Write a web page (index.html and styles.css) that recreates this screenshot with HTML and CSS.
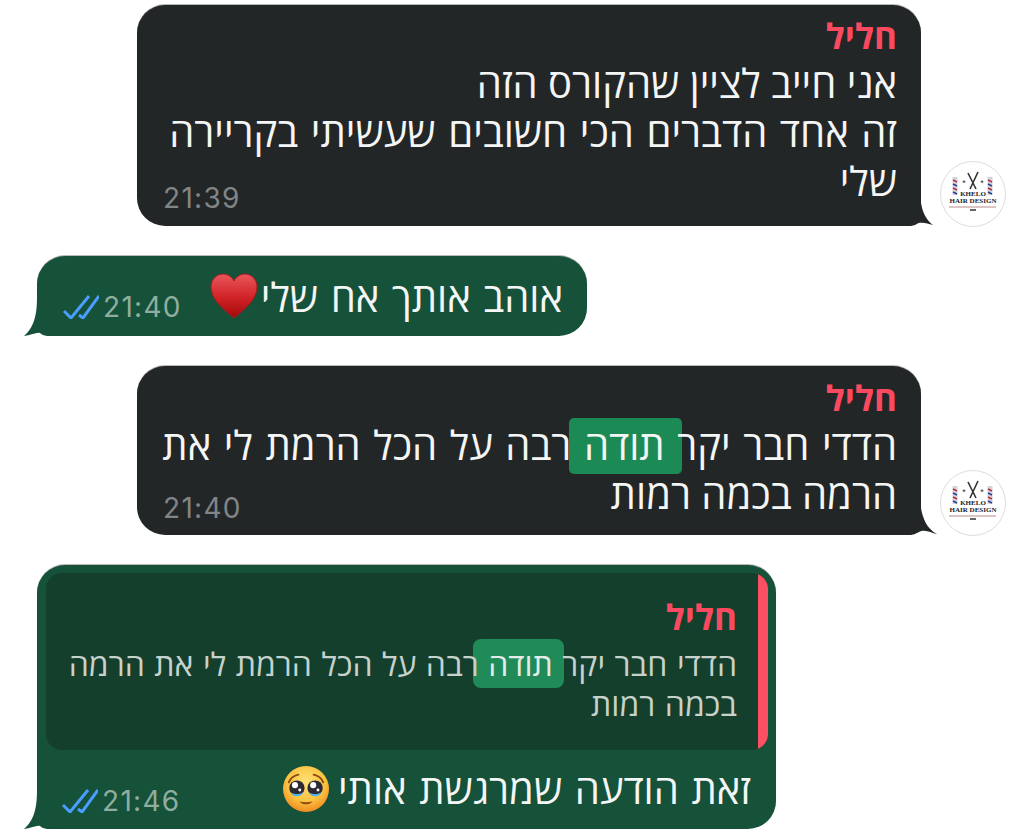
FILE: index.html
```html
<!DOCTYPE html>
<html lang="he">
  <head>
    <meta charset="utf-8" />
    <title>Chat</title>
    <link rel="stylesheet" href="styles.css">
  </head>
  <body>
    <svg class="defs" width="0" height="0">
      <defs>
        <linearGradient id="heart-fill" x1="0" y1="0" x2="0" y2="1">
          <stop offset="0" stop-color="#e9565a" />
          <stop offset="0.55" stop-color="#d02226" />
          <stop offset="1" stop-color="#a30808" />
        </linearGradient>
        <radialGradient id="face-fill" cx="0.5" cy="0.35" r="0.7">
          <stop offset="0" stop-color="#ffe277" />
          <stop offset="0.6" stop-color="#fbc13f" />
          <stop offset="1" stop-color="#ee7f1c" />
        </radialGradient>
        <symbol id="ticks" viewBox="0 0 36 24">
          <path d="M1 16l7 7L26 1" fill="none" stroke="#4a9eff" stroke-width="3" />
          <path d="M16 20l4 3L36 1" fill="none" stroke="#4a9eff" stroke-width="3" />
        </symbol>
        <symbol id="avatar" viewBox="0 0 66 66">
          <circle cx="33" cy="33" r="32.5" fill="#fff" stroke="#ddd" />
          <path d="M15 16v18M50 16v18" fill="none" stroke="#d3d3de" stroke-width="5" />
          <path d="M13 19l4 2M13 27l4 2M48 19l4 2M48 27l4 2" fill="none" stroke="#b3303c" stroke-width="1.500" />
          <path d="M13 23l4 2M13 31l4 2M48 23l4 2M48 31l4 2" fill="none" stroke="#2c3f8f" stroke-width="1.500" />
          <path d="M28 12l8 16M38 11l-8 17" fill="none" stroke="#333" stroke-width="1.600" />
          <text x="24" y="25" class="avatar-star">*</text>
          <text x="42" y="25" class="avatar-star">*</text>
          <text x="33" y="35" class="avatar-name">KHELO</text>
          <text x="33" y="42" class="avatar-name">HAIR DESIGN</text>
          <path d="M9 46h47" fill="none" stroke="#b98a8a" />
          <path d="M30 49h6" fill="none" stroke="#333" stroke-width="1.500" />
        </symbol>
      </defs>
    </svg>

    <div class="chat">
      <div class="row row-in">
        <div class="bubble bubble-in first-in">
          <div class="name">חליל</div>
          <div class="line">אני חייב לציין שהקורס הזה</div>
          <div class="line spaced">זה אחד הדברים הכי חשובים שעשיתי בקריירה</div>
          <div class="foot">
            <div class="line">שלי</div>
            <div class="meta">21:39</div>
          </div>
          <svg class="tail tail-right" viewBox="0 0 40 40" fill="#232627">
            <path d="M0 0H27C27 14 28 30 40 39C33 37 28 35 20 39L0 40Z" />
          </svg>
        </div>
        <svg class="avatar"><use href="#avatar" /></svg>
      </div>

      <div class="row">
        <div class="bubble bubble-out short-out">
          <div class="foot">
            <div class="line spaced">
              אוהב אותך אח שלי<svg class="emoji heart" viewBox="0 0 48 46">
                <path d="M24 45C12 35 1 26 1 14C1 6 7 1 13 1C18 1 22 4 24 8C26 4 30 1 35 1C41 1 47 6 47 14C47 26 36 35 24 45Z" fill="url(#heart-fill)" stroke="#a81a1c" />
              </svg>
            </div>
            <div class="meta"><svg class="ticks"><use href="#ticks" /></svg>21:40</div>
          </div>
          <svg class="tail tail-left" viewBox="0 0 40 40" fill="#16513a">
            <path d="M40 0H13C13 14 12 30 0 40C8 39 16 34 24 38L40 40Z" />
          </svg>
        </div>
      </div>

      <div class="row row-in">
        <div class="bubble bubble-in second-in">
          <div class="name">חליל</div>
          <div class="line spaced">הדדי חבר יקר <span class="mark">תודה</span> רבה על הכל הרמת לי את</div>
          <div class="foot">
            <div class="line">הרמה בכמה רמות</div>
            <div class="meta">21:40</div>
          </div>
          <svg class="tail tail-right wide" viewBox="0 0 40 40" fill="#232627">
            <path d="M0 0H23C23 14 26 32 40 39C33 38 28 33 20 38L0 40Z" />
          </svg>
        </div>
        <svg class="avatar"><use href="#avatar" /></svg>
      </div>

      <div class="row">
        <div class="bubble bubble-out long-out">
          <div class="quote">
            <div class="quote-bar"></div>
            <div class="quote-body">
              <div class="name quote-name">חליל</div>
              <div class="quote-line">הדדי חבר יקר <span class="mark">תודה</span> רבה על הכל הרמת לי את הרמה</div>
              <div class="quote-line">בכמה רמות</div>
            </div>
          </div>
          <div class="foot">
            <div class="line spaced">
              זאת הודעה שמרגשת אותי<svg class="emoji" viewBox="0 0 48 48">
                <circle cx="24" cy="24" r="24" fill="url(#face-fill)" />
                <path d="M6 17C8 12 12 10 16 9M42 17C40 12 36 10 32 9" fill="none" stroke="#8a4a12" stroke-width="2" stroke-linecap="round" />
                <circle cx="14.500" cy="23" r="8" fill="#2d2a33" />
                <circle cx="33.500" cy="23" r="8" fill="#2d2a33" />
                <circle cx="12.500" cy="20" r="3.200" fill="#fff" />
                <circle cx="31.500" cy="20" r="3.200" fill="#fff" />
                <circle cx="17.500" cy="25" r="1.500" fill="#fff" />
                <circle cx="36.500" cy="25" r="1.500" fill="#fff" />
                <path d="M8 27C10 33 19 33 21 27C18 30 11 30 8 27ZM27 27C29 33 38 33 40 27C37 30 30 30 27 27Z" fill="#4fb3f0" />
                <path d="M17 37C21 41 27 41 31 37C27 38 21 38 17 37Z" fill="#8a4a12" />
              </svg>
            </div>
            <div class="meta"><svg class="ticks"><use href="#ticks" /></svg>21:46</div>
          </div>
          <svg class="tail tail-left" viewBox="0 0 40 40" fill="#16513a">
            <path d="M40 0H13C13 14 12 30 0 40C8 39 16 34 24 38L40 40Z" />
          </svg>
        </div>
      </div>
    </div>
  </body>
</html>
```
FILE: styles.css
```css
body {
  margin: 0;
  padding: 0;
  background-color: #fff;
  font-family: "Open Sans", "Liberation Sans", sans-serif;
}

.defs {
  display: block;
  height: 0;
}

.chat {
  display: flex;
  flex-direction: column;
  gap: 30px;
  padding: 5px 0 0 37px;
}

.row {
  display: flex;
  align-items: flex-end;
}

.row-in {
  padding-left: 100px;
  gap: 19px;
}

.bubble {
  position: relative;
  isolation: isolate;
  box-sizing: border-box;
  direction: rtl;
  border-radius: 28px;
  padding: 0 24px 0 26px;
  color: #f4f5f5;
  box-shadow: 0 -1px 0 #b9b9b9;
}

.bubble-in {
  width: 784px;
  background-color: #232627;
  border-bottom-right-radius: 10px;
}

.bubble-out {
  background-color: #16513a;
  border-bottom-left-radius: 10px;
}

.first-in {
  height: 221px;
  padding-top: 9px;
}

.second-in {
  height: 169px;
  padding-top: 10px;
}

.short-out {
  width: 550px;
  height: 80px;
  padding-top: 16px;
}

.long-out {
  width: 739px;
  height: 264px;
  padding: 8px 25px 0 25px;
}

.name {
  font-size: 35px;
  font-weight: 700;
  line-height: 44px;
  color: #fb4a5f;
}

.line {
  font-size: 40px;
  line-height: 49px;
  white-space: nowrap;
}

.spaced {
  word-spacing: 2.200px;
}

.foot {
  display: flex;
  justify-content: space-between;
}

.meta {
  display: flex;
  align-items: center;
  gap: 4px;
  direction: ltr;
  margin-top: 18px;
  height: 48px;
  font-family: Inter, "Liberation Sans", sans-serif;
  font-size: 28px;
  letter-spacing: 1.300px;
  color: #818587;
}

.second-in .meta {
  margin-top: 15px;
}

.bubble-out .meta {
  color: #8fae9f;
}

.short-out .meta {
  margin-top: 11px;
}

.long-out .meta {
  margin-top: 13px;
}

.ticks {
  width: 36px;
  height: 24px;
}

.emoji {
  width: 48px;
  height: 46px;
  margin-right: 8px;
  vertical-align: -8px;
}

.heart {
  margin-right: 3px;
  vertical-align: -7px;
}

.mark {
  position: relative;
}

.mark::before {
  content: "";
  position: absolute;
  z-index: -1;
  top: 1px;
  bottom: -2px;
  left: -15px;
  right: -17px;
  border-radius: 5px;
  background-color: #1c8a55;
}

.quote {
  display: flex;
  isolation: isolate;
  height: 177px;
  margin: 0 -17px 0 -16px;
  border-radius: 16px;
  overflow: hidden;
  background-color: #143f2d;
}

.quote-bar {
  width: 10px;
  background-color: #fb4f63;
}

.quote-body {
  padding: 21px 21px 0 0;
}

.quote-name {
  line-height: 46px;
  margin-bottom: 4px;
}

.quote-line {
  font-size: 32px;
  line-height: 40px;
  word-spacing: 1.200px;
  white-space: nowrap;
  color: #c6d2cc;
}

.quote-line .mark {
  color: #e3ece7;
}

.quote-line .mark::before {
  top: -3px;
  bottom: -3px;
  left: -15px;
  right: -11px;
  background-color: #208a58;
  border-radius: 8px;
}

.long-out .foot {
  margin-top: 14px;
}

.tail {
  position: absolute;
  bottom: 0;
  width: 40px;
  height: 40px;
}

.tail-left {
  left: -13px;
  z-index: -1;
}

.tail-right {
  right: -12px;
  z-index: -1;
}

.tail-right.wide {
  right: -16px;
}

.avatar {
  width: 66px;
  height: 66px;
  margin-bottom: -1px;
  flex-shrink: 0;
}

.avatar-name {
  font-family: "Liberation Serif", serif;
  font-size: 7px;
  font-weight: 700;
  text-anchor: middle;
  fill: #222;
}

.avatar-star {
  font-family: "Liberation Sans", sans-serif;
  font-size: 9px;
  text-anchor: middle;
  fill: #333;
}
```
